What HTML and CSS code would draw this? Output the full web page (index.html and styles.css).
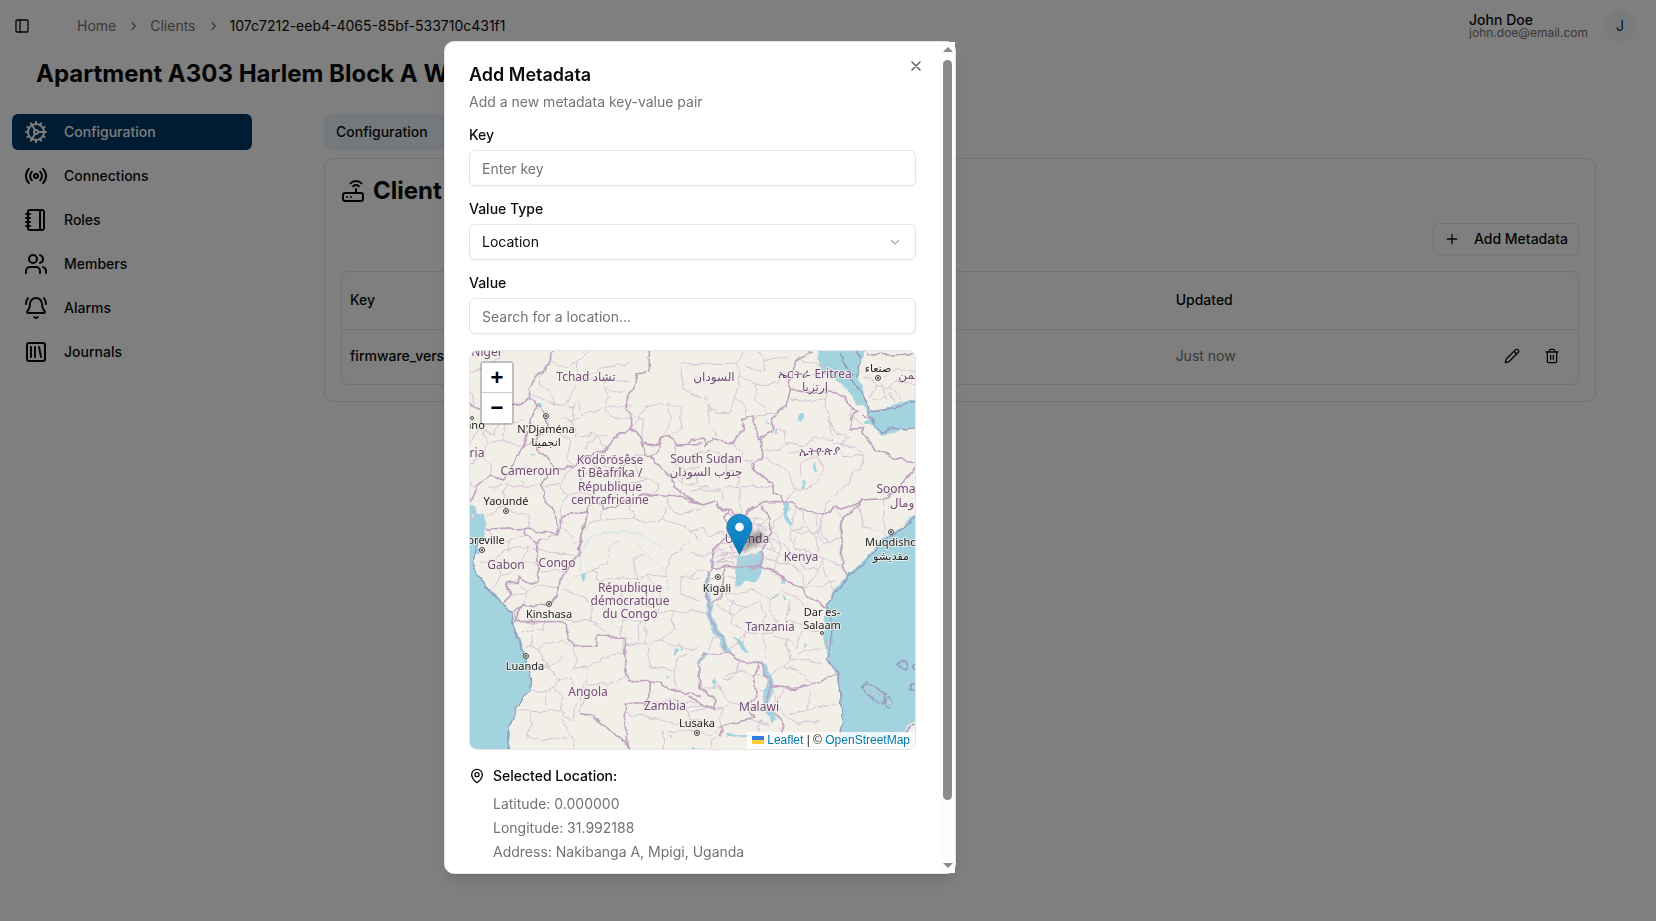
FILE: index.html
```html
<!DOCTYPE html>
<html lang="en">
<head>
<meta charset="utf-8">
<meta name="viewport" content="width=device-width, initial-scale=1">
<title>Client configuration</title>
<link rel="stylesheet" href="styles.css">
</head>
<body>
<div class="page">
  <header class="topbar">
    <button class="icon-btn" type="button" aria-label="Toggle sidebar"><svg class="icon sm" viewBox="0 0 24 24"><rect x="3" y="3" width="18" height="18" rx="2"/><path d="M9 3v18"/></svg></button>
    <nav class="crumbs" aria-label="Breadcrumb">
      <a href="#">Home</a>
      <svg class="crumb-sep" viewBox="0 0 15 15"><path d="M6 3.5l4 4-4 4"/></svg>
      <a href="#">Clients</a>
      <svg class="crumb-sep" viewBox="0 0 15 15"><path d="M6 3.5l4 4-4 4"/></svg>
      <span class="current">107c7212-eeb4-4065-85bf-533710c431f1</span>
    </nav>
    <div class="user">
      <div class="user-text"><span class="user-name">John Doe</span><span class="user-mail">john.doe@email.com</span></div>
      <span class="avatar">J</span>
    </div>
  </header>
  <h1 class="title">Apartment A303 Harlem Block A Wifi</h1>
  <div class="columns">
    <nav class="side" aria-label="Client sections">
      <a class="side-link active" href="#"><svg class="icon" viewBox="0 0 24 24"><circle cx="12" cy="12" r="8"/><circle cx="12" cy="12" r="2"/><path d="M12 2v2M12 22v-2M17 20.66l-1-1.73M11 10.27 7 3.34M20.66 17l-1.73-1M3.34 7l1.73 1M14 12h8M2 12h2M20.66 7l-1.73 1M3.34 17l1.73-1M17 3.34l-1 1.73M11 13.73l-4 6.93"/></svg>Configuration</a>
      <a class="side-link" href="#"><svg class="icon" viewBox="0 0 24 24"><path d="M4.9 19.1C1 15.2 1 8.8 4.9 4.9M7.8 16.2c-2.3-2.3-2.3-6.1 0-8.5M16.2 7.8c2.3 2.3 2.3 6.1 0 8.5M19.1 4.9C23 8.8 23 15.1 19.1 19"/><circle cx="12" cy="12" r="2"/></svg>Connections</a>
      <a class="side-link" href="#"><svg class="icon" viewBox="0 0 24 24"><path d="M2 6h4M2 10h4M2 14h4M2 18h4M16 2v20"/><rect x="4" y="2" width="16" height="20" rx="2"/></svg>Roles</a>
      <a class="side-link" href="#"><svg class="icon" viewBox="0 0 24 24"><path d="M16 21v-2a4 4 0 0 0-4-4H6a4 4 0 0 0-4 4v2"/><circle cx="9" cy="7" r="4"/><path d="M22 21v-2a4 4 0 0 0-3-3.87M16 3.13a4 4 0 0 1 0 7.75"/></svg>Members</a>
      <a class="side-link" href="#"><svg class="icon" viewBox="0 0 24 24"><path d="M10.268 21a2 2 0 0 0 3.464 0M22 8c0-2.3-.8-4.3-2-6M3.262 15.326A1 1 0 0 0 4 17h16a1 1 0 0 0 .74-1.673C19.41 13.956 18 12.499 18 8A6 6 0 0 0 6 8c0 4.499-1.411 5.956-2.738 7.326M4 2C2.8 3.7 2 5.7 2 8"/></svg>Alarms</a>
      <a class="side-link" href="#"><svg class="icon" viewBox="0 0 24 24"><rect x="3" y="3" width="18" height="18" rx="2"/><path d="M7 7v10M11 7v10M15 7l2 10"/></svg>Journals</a>
    </nav>
    <main class="main">
      <div class="tabs"><button class="tab" type="button">Configuration</button></div>
      <section class="card">
        <h2 class="card-title"><svg class="icon" viewBox="0 0 24 24"><rect x="2" y="14" width="20" height="8" rx="2"/><path d="M6.01 18H6M10.01 18H10M15 10v4M17.84 7.17a4 4 0 0 0-5.66 0M20.66 4.34a8 8 0 0 0-11.31 0"/></svg>Client Metadata</h2>
        <div class="card-actions"><button class="add-btn" type="button"><svg class="icon sm" viewBox="0 0 24 24"><path d="M5 12h14M12 5v14"/></svg>Add Metadata</button></div>
        <div class="table-wrap">
          <table class="table">
            <thead><tr><th class="col-key">Key</th><th class="col-value">Value</th><th>Updated</th><th aria-label="Actions"></th></tr></thead>
            <tbody><tr><td class="strong">firmware_version</td><td>1.0</td><td>Just now</td>
              <td><div class="row-actions">
                <button class="row-btn" type="button" aria-label="Edit"><svg class="icon sm" viewBox="0 0 24 24"><path d="M21.174 6.812a1 1 0 0 0-3.986-3.987L3.842 16.174a2 2 0 0 0-.5.83l-1.321 4.352a.5.5 0 0 0 .623.622l4.353-1.32a2 2 0 0 0 .83-.497zM15 5l4 4"/></svg></button>
                <button class="row-btn" type="button" aria-label="Delete"><svg class="icon sm" viewBox="0 0 24 24"><path d="M3 6h18M19 6v14a2 2 0 0 1-2 2H7a2 2 0 0 1-2-2V6M8 6V4a2 2 0 0 1 2-2h4a2 2 0 0 1 2 2v2M10 11v6M14 11v6"/></svg></button>
              </div></td></tr></tbody>
          </table>
        </div>
      </section>
    </main>
  </div>
</div>

<div class="overlay">
  <div class="dialog" role="dialog" aria-modal="true" aria-labelledby="dialog-title">
    <div class="dialog-body">
      <div class="dialog-head">
        <h2 class="dialog-title" id="dialog-title">Add Metadata</h2>
        <p class="dialog-desc">Add a new metadata key-value pair</p>
      </div>
      <div class="field"><label for="key">Key</label><input class="control" id="key" type="text" placeholder="Enter key"></div>
      <div class="field"><label for="type">Value Type</label>
        <div class="select-wrap"><select class="control" id="type"><option>Location</option></select><svg class="select-arrow" viewBox="0 0 24 24"><path d="M6 9l6 6 6-6"/></svg></div></div>
      <div class="field"><label for="value">Value</label><input class="control" id="value" type="text" placeholder="Search for a location..."></div>
      <div class="map">
        <svg class="map-canvas" viewBox="470 351 445 398" preserveAspectRatio="xMidYMid slice" role="img" aria-label="Map of central Africa">
          <defs>
            <filter id="rough" x="0" y="0" width="1" height="1" filterUnits="objectBoundingBox" color-interpolation-filters="sRGB"><feTurbulence type="fractalNoise" baseFrequency="0.09" numOctaves="2" seed="4"/><feDisplacementMap in="SourceGraphic" scale="7" xChannelSelector="R" yChannelSelector="G"/></filter>
            <linearGradient id="pin" x1="0" y1="0" x2="0" y2="1"><stop offset="0" stop-color="#1e93cf"/><stop offset="1" stop-color="#0076b8"/></linearGradient>
            <filter id="soft" x="-50%" y="-50%" width="200%" height="200%"><feGaussianBlur stdDeviation="2"/></filter>
          </defs>
          <rect x="460" y="340" width="470" height="420" fill="#f2efe9"/>
          <g filter="url(#rough)">
            <rect x="460" y="340" width="470" height="420" fill="none"/>
            <!-- north-west -->
            <g transform="translate(460 340) scale(.3333)">
              <path class="sea" d="M0 478L45 500 50 515 75 518 80 565 70 600 55 610 60 640 0 640z"/>
              <path class="isle" d="M36 515l12 8-6 12-10-3z"/>
              <path class="water" d="M225 190l20-2 6 10-14 8zM320 198l20 2 5 8-12-2zM210 335l12 6 6 8-12-2zM178 425l12 2-4 4zM104 440l5 8-4 0zM130 430l5 5"/>
              <path class="river" d="M370 630C380 590 420 575 500 575 560 580 590 610 600 630"/>
              <path class="adm" d="M275 65L320 85 350 65 388 30M255 75L240 130 275 160 285 195 215 160M350 65L348 130 380 110 420 85 490 75 510 60M285 195L330 180 348 130M370 115L430 120 510 125M430 120L440 170 435 200 515 195M440 150L495 155M340 240L370 220 430 205 450 230 515 240M345 185L340 240 350 290 400 280 440 325M300 235L340 240M290 265L330 300 320 350 345 375M380 330L385 300 440 280M360 215L355 180M28 100L120 50 125 30M28 150L40 190M120 250L100 290 60 260 28 320M60 260L80 310 70 350 28 370M80 310L125 300 190 320M70 350L95 380 90 405M150 395L200 380 245 410M125 300L140 250 190 240M228 300L190 320M85 440L135 435 180 440 245 435M135 435L125 500 80 530M125 500L170 520 210 530 212 565M28 430L50 440M245 440L300 430 320 470 360 450 400 470 385 495M300 430L320 400 345 375M320 470L300 500 310 530M400 340L410 380 470 390 520 350 555 345M470 390L480 440 510 475M360 450L365 410 410 380M480 440L560 420 600 440 575 470M520 350L540 400 560 420M520 260L560 200 620 190 640 240 605 290M545 295L550 240 520 220M620 190L665 200 660 270 630 290M664 72L720 70M664 72L670 150 700 165 720 160M645 315L640 370 680 390 720 380M680 390L670 440M605 385L680 440 720 430M620 500L610 540 560 550 520 530 430 540 425 505M610 540L680 560 720 600M520 530L510 475M370 560L420 540M620 470L640 520 720 510M90 570L95 610 140 600 150 630M140 600L195 590M235 600L300 585M310 560L350 610"/>
              <path class="nat" d="M275 20L275 65 230 112 205 150 213 172 190 185 150 197M0 180L60 205M213 172L228 200 213 245 190 320 165 350 150 395 130 420 90 405 50 440 30 485M228 195L250 215 262 260 232 300 240 335 265 355 285 390 245 430 250 470 290 525 295 585M285 390L345 375 400 340 440 325 480 280 515 268 545 295 555 345M565 20L565 100 530 105 520 150 500 170 495 205 515 225 515 268M555 345L575 347 600 385 635 410 640 440 685 470 725 495M552 310L590 315 605 290 630 290 650 315 700 312 725 310M605 290L590 335 575 347M295 585L310 530 380 515 385 495 420 490 430 505 470 495 510 475 560 460 620 470 660 465 725 495M380 515L360 600 358 640M80 570L200 565 240 575 295 585M200 565L195 590 235 610 235 640"/>
            </g>
            <!-- north-east -->
            <g transform="translate(690 340) scale(.3333)">
              <path class="sea" d="M383 20L395 100 440 120 470 150 500 190 535 215 545 235 515 248 540 255 575 285 620 275 690 252 690 176 620 190 570 212 540 212 525 170 515 130 505 95 515 60 530 20z"/>
              <path class="water" d="M318 225l20-3 2 15-8 8-12-5zM226 240l8 4 6 12-8-2zM250 265l8-6 4 22-6 4zM374 370l6 0-2 20-8 0zM345 420l8 4-10 24-6 0zM282 488l12 4-2 38 14 32-20-16z"/>
              <path class="coast" d="M450 30L460 70 485 100 480 120 515 150 535 205 548 250 575 278 610 265 650 270 690 250M545 216L600 205 690 180M500 30L515 60 500 110"/>
              <path class="adm" d="M0 70L140 70 165 30M140 70L150 110 135 170 160 200 175 225M0 160L50 175 60 210 120 220 135 170M60 210L55 260 90 290M150 110L200 130 260 130 280 100 300 130M165 75L220 100 225 60 290 50M190 230L240 220 262 215M200 130L195 180 230 215M225 60L200 30M0 345L60 330 100 350 185 360M20 400L30 450 90 450 100 480M100 440L215 440 250 445M150 445L150 500M100 350L115 390 150 400 140 440M185 372L150 340 130 310M300 180L360 185 410 175 415 240 430 300 380 290 340 320 290 310 285 270 262 260M415 240L440 280 480 290M225 330L270 330 290 310M225 350L250 370 285 385 300 400 310 450 290 485M300 340L335 340M330 370L380 350 400 380 380 430 350 450 310 450M440 330L460 350 520 345 510 390 480 395 480 430 450 450 410 490 400 525M430 310L500 320 520 345M330 370L335 420M455 170L490 200 480 240M520 260L500 240 483 240M415 150L410 175M470 290L455 320M540 170L560 140 600 145 620 120 677 130M540 170L570 180 600 160 610 190M560 140L550 120 520 110M570 130L590 180M600 145L640 190M580 110L620 85 677 95M505 500L520 560 580 570 590 590M580 480L585 570M330 510L350 560 385 600 380 630M350 560L300 580 310 630M400 525L385 570 420 610M440 510L455 540M300 510L255 540 240 590 250 630M340 60L400 80M320 100L385 110M0 450L60 440"/>
              <path class="nat" d="M365 35L320 60 300 130 300 160 285 200 262 215 245 250 245 275 218 290 218 350M-5 310L5 295 45 295 45 320 70 295 130 310 160 270 155 235 170 235 175 225 190 225 190 255 215 300M218 350L185 372 215 405 250 435 250 460 280 465 280 485M-5 485L40 495 70 485 100 515 125 513 160 525 190 505 230 485 280 485M280 485L310 492 350 515 400 525 440 500 455 508 520 480 590 475 690 375M690 374L640 360 560 330 515 282 520 265 483 267M300 150L340 155 420 150 465 170 500 215 483 240 483 267M520 225L545 235M520 480L455 540 455 640M530 40L600 45 690 40"/>
            </g>
            <!-- south-west -->
            <g transform="translate(460 540) scale(.3333)">
              <path class="sea" d="M0 -10L58 -10 40 65 60 110 90 150 130 185 155 215 160 250 180 290 195 340 212 400 210 450 170 500 155 550 143 640 0 640z"/>
              <path class="coast" d="M55 0L36 65 56 110 86 152 126 188 152 218 157 250 177 292 190 340 212 400 210 455 168 500 150 560 138 640"/>
              <path class="water" d="M362 100l14-4 0 18-6 20-4-18zM645 322l10 2-8 22-6 0zM715 350l10 0 0 25-8-8zM660 320l6 0-4 14zM618 405l10 8-6 4zM625 580l8 6-4 12z"/>
              <path class="river" d="M388 0C365 25 350 50 365 90M520 0C560 50 640 80 620 150M420 160C440 220 460 260 520 300"/>
              <path class="adm" d="M60 70L110 60 130 30 200 20 232 30M110 60L120 110 90 150M120 110L160 90 190 60 238 75M190 60L200 20M150 165L200 160 235 130M175 130L200 160 195 195M240 100L290 90 320 90M235 130L300 145M240 30L300 40 355 50M345 110L400 85 440 70 450 20 470 0M400 85L420 130 470 110 530 120 560 105 620 110 625 60 690 0M530 120L520 60 555 40M310 150L370 165 400 200 480 180 490 130M400 200L390 240 340 245 310 235M390 240L440 270M480 180L540 190 600 215 720 215M560 105L600 150 600 215M665 110L720 115M665 110L662 160 720 185M480 290L490 240 540 240 535 315 490 310M540 240L560 215M560 240L555 310M535 315L600 300 640 270 640 215M600 300L700 330 720 320M565 320L570 380 640 390 660 350 700 330M640 390L645 440M185 275L250 270 255 245M200 325L215 320 220 285M215 320L240 330 250 310 305 305 345 320M240 330L260 380 300 420 340 415 345 440M345 320L345 385 385 380 430 350 490 340M385 380L380 420 360 480 345 500 330 535 310 530 305 470 280 440 250 455 215 450M380 435L440 435 503 410M265 380L310 350M215 380L265 378M170 505L210 515 305 512M215 520L210 560 195 600M305 540L335 590 340 628M200 585L250 600 320 590M280 440L300 420M255 460L265 500M496 520L560 530 640 550 720 555M610 575L720 570M610 575L610 628M640 500L720 500M680 500L690 540 720 540M565 492L620 480 720 490M360 518L380 440"/>
              <path class="nat" d="M240 -5L232 30 238 75 230 120 205 130 175 110 175 130 140 130 150 165 130 185M358 -5L355 50 320 90 300 120 295 165 270 190 225 200 190 195 160 215 165 240 185 200M160 245L310 245 320 275 345 320 408 318 412 285 445 283 450 293 490 295 492 360 503 425 560 425 580 430 605 430 615 440 665 455 700 460 725 470M568 425L565 492 496 492 496 600 515 635M360 518L400 535 440 560 480 590 510 630"/>
            </g>
            <!-- south-east -->
            <g transform="translate(690 490) scale(.3333)">
              <path class="sea" d="M690 50L640 110 570 150 520 215 475 255 435 290 410 345 400 400 400 450 415 500 415 520 440 555 448 610 455 690 450 740 620 740 690 680z"/>
              <path class="coast" d="M690 65L645 112 575 155 525 220 475 262 430 310 410 350 425 400 425 460 412 510 440 545 448 600 458 690 452 740M640 728L690 690"/>
              <path class="isle" d="M530 585l6 0 2 22-6-4zM542 618l8 0 0 6-6 0zM568 610l8 4-4 4zM590 628l8 4 0 8-6 2zM408 456l8 6-6 8z"/>
              <path class="coast" d="M533 577L588 612 572 642 527 620 517 595zM585 625l14-6 9 16-8 17-14-4-5-12zM628 512l14-4 9 14-6 14-14-2-6-12zM677 585l-14 0-2 14 16 2M677 518l-8 10 8 12"/>
              <path class="water lake" d="M143 195L165 200 215 187 217 235 205 262 190 278 165 268 150 288 138 290 142 235zM48 250l8 2 2 60 8 50 8 40 30 50 18 34-16-6-35-55-15-35-6-60zM216 520l12 6 10 18 4 40 4 20-14 32 10 30 12 20-6 8-18-30-10-40 12-50-4-30zM135 448l20 14 22 24-10-2-28-20zM25 510l20-22 4 6-20 24z"/>
              <path class="water" d="M70 195l-12 15 2 10 10-10zM90 155l14-28 6-2-4 22zM62 580l14-14 2 14-10 10zM240 320l20-8 0 6-14 6zM280 260l6 4-2 18-4 0zM275 318l10 2-2 8-8-2zM282 40l10 0 2 36 14 30-22-20zM340 462l8 4-8 10zM268 710l8 6-2 8zM105 732l50 4 55-4-30 8-70 4zM0 770l40 4 0 10-40 0z"/>
              <path class="adm" d="M0 125L40 115 60 140 100 125M0 190L40 200 70 185M0 260L30 240 50 250M0 365L60 365M110 75L150 70 150 50M160 75L210 90M125 90L235 110M120 110L110 140 150 150 120 170 160 180 110 190 90 215 130 220 100 180 75 190 90 160 120 160 140 200 70 215 110 215M235 85L200 110 215 140 190 150 230 165 195 175 215 130 240 140M170 80L190 110 180 140 210 160M150 150L175 160 160 190M80 200L120 190 150 215 140 230M190 185L190 230M165 200L165 230M180 190L215 200M130 70L140 100 120 120M150 90L160 130 140 140M200 80L190 100 230 120M175 65L170 90M85 170L100 200 80 225M100 140L130 135M210 170L225 150 245 160M240 150L280 160 300 190 290 220 330 240 345 290M220 175L270 190 260 215 290 220M245 120L270 150 270 190M225 200L260 215 250 240M320 60L300 110 320 130 380 125 400 160 450 150M380 125L385 75M320 130L310 180 345 175 400 210 455 225M400 210L380 250 345 290M400 210L410 270 430 300M345 290L400 285 435 270M300 190L340 230 385 240M110 260L140 265M75 280L95 290 70 300 90 320 65 330M95 270L80 250 60 270M105 310L150 310 200 300 240 325 270 315M80 350L130 370 120 400 165 425M130 330L120 370M130 370L160 350 210 340 225 380 215 400M105 310L130 340 170 350M240 330L250 390 270 400M270 300L330 330 345 350M300 330L290 390 320 400 345 415M120 480L165 430 240 430 270 400M165 430L160 460M220 430L225 510M245 440L290 450 300 510 280 530 240 555M290 450L320 470 340 415 395 430M300 510L400 520M320 490L390 470M280 530L330 540 370 580M35 600L80 590 100 600 120 640 90 670 90 710M100 560L150 540 190 560M60 480L65 440 90 450M150 510L130 560 100 570M170 650L120 640M72 655L100 660M190 590L220 600M200 550L220 560M175 690L240 700M250 600L255 640 290 680 330 700 390 690M360 600L355 660 440 640M355 660L300 670M290 590L255 640M0 670L40 655M0 700L60 740 90 710M90 730L60 770M210 690L200 770"/>
              <path class="nat" d="M105 230L215 230 340 295 345 315 410 355M125 63L105 80 110 130 70 185 65 235 105 230M65 235L50 260M215 50L240 85 245 130 215 180 215 230M105 230L100 270 95 320 65 345M50 260L52 330 65 395 110 478M118 487L40 492 25 515 30 600 70 620 72 655 40 650 -5 615M118 487L150 510 210 520 190 560 200 620 170 650 190 685 90 710 95 740M215 520L240 590 320 595 370 580 440 550M240 590L230 640 260 680 280 700 270 735M455 90L455 225 475 255"/>
            </g>
          </g>
          <g class="town">
            <circle cx="546" cy="416" r="2.5"/><circle cx="506" cy="511" r="2.5"/><circle cx="482" cy="550" r="2.5"/><circle cx="549" cy="604" r="2.5"/><circle cx="526" cy="656" r="2.5"/><circle cx="718" cy="577" r="2.5"/><circle cx="697" cy="733" r="2.5"/><circle cx="891" cy="532" r="2.5"/><circle cx="878" cy="378" r="2.5"/><circle cx="822" cy="633" r="1.5"/><circle cx="472" cy="418" r="1.5"/>
          </g>
          <g class="town-dot"><circle cx="546" cy="416" r="1"/><circle cx="506" cy="511" r="1"/><circle cx="482" cy="550" r="1"/><circle cx="549" cy="604" r="1"/><circle cx="526" cy="656" r="1"/><circle cx="718" cy="577" r="1"/><circle cx="697" cy="733" r="1"/><circle cx="891" cy="532" r="1"/><circle cx="878" cy="378" r="1"/></g>
          <g class="country">
            <text x="487" y="356">Niger</text><text x="586" y="381">Tchad تشاد</text><text x="714" y="381">السودان</text><text x="815" y="378">ኤርትራ Eritrea</text><text x="815" y="391">إرتريا</text><text x="908" y="379">يمن</text>
            <text x="477" y="457">ria</text><text x="530" y="475">Cameroun</text>
            <text x="610" y="464">Ködörösêse</text><text x="610" y="477">tî Bêafrîka /</text><text x="610" y="491">République</text><text x="610" y="504">centrafricaine</text>
            <text x="706" y="463">South Sudan</text><text x="706" y="476">جنوب السودان</text><text x="819" y="455">ኢትዮጵያ</text>
            <text x="896" y="493">Sooma</text><text x="902" y="507">ومال</text>
            <text x="506" y="569">Gabon</text><text x="557" y="567">Congo</text><text x="747" y="543">Uganda</text><text x="801" y="561">Kenya</text>
            <text x="630" y="592">République</text><text x="630" y="605">démocratique</text><text x="630" y="618">du Congo</text>
            <text x="770" y="631">Tanzania</text><text x="588" y="696">Angola</text><text x="665" y="710">Zambia</text><text x="759" y="711">Malawi</text>
          </g>
          <g class="city">
            <text x="546" y="433">N'Djaména</text><text x="546" y="446">انجمينا</text><text x="475" y="429">ano</text><text x="506" y="505">Yaoundé</text><text x="486" y="544">breville</text><text x="549" y="618">Kinshasa</text><text x="525" y="670">Luanda</text><text x="717" y="592">Kigali</text><text x="697" y="727">Lusaka</text><text x="822" y="616">Dar es-</text><text x="822" y="629">Salaam</text><text x="891" y="546">Muqdisho</text><text x="891" y="560">مقديشو</text><text x="878" y="372">صنعاء</text>
          </g>
          <path d="M740 553L748 537 758 530 764 534 760 543z" fill="#000" opacity=".35" filter="url(#soft)"/>
          <path d="M739.500 554.500L729.500 535C727.500 531 727 529 727 526.500A12.500 12 0 0 1 752 526.500C752 529 751.500 531 749.500 535z" fill="url(#pin)" stroke="#1372a8" stroke-width=".8"/>
          <circle cx="739.500" cy="527" r="4.300" fill="#fff"/>
        </svg>
        <div class="zoom"><button type="button" aria-label="Zoom in">+</button><button type="button" aria-label="Zoom out">−</button></div>
        <div class="credit"><a href="#"><svg class="flag" viewBox="0 0 12 8"><path fill="#2f7de1" d="M0 0h12v4H0z"/><path fill="#ffd035" d="M0 4h12v4H0z"/></svg> Leaflet</a> | © <a href="#">OpenStreetMap</a></div>
      </div>
      <div class="picked">
        <svg class="icon sm picked-icon" viewBox="0 0 24 24"><path d="M20 10c0 4.993-5.539 10.193-7.399 11.799a1 1 0 0 1-1.202 0C9.539 20.193 4 14.993 4 10a8 8 0 0 1 16 0"/><circle cx="12" cy="10" r="3"/></svg>
        <div class="picked-text">
          <p class="picked-title">Selected Location:</p>
          <p>Latitude: 0.000000</p><p>Longitude: 31.992188</p><p>Address: Nakibanga A, Mpigi, Uganda</p>
        </div>
      </div>
    </div>
    <div class="scrollbar" aria-hidden="true"><span class="arrow up"></span><span class="thumb"></span><span class="arrow down"></span></div>
    <button class="close" type="button" aria-label="Close"><svg class="icon sm" viewBox="0 0 24 24"><path d="M18 6 6 18M6 6l12 12"/></svg></button>
  </div>
</div>
</body>
</html>
```
FILE: styles.css
```css
* { box-sizing: border-box; }
body { margin: 0; background: #fff; color: #0a0a0a; font: 14px/20px Inter, "Liberation Sans", sans-serif; }
h1, h2, p { margin: 0; }
a { color: inherit; text-decoration: none; }
button { font: inherit; color: inherit; background: none; border: 0; padding: 0; cursor: pointer; }
.icon { width: 24px; height: 24px; flex: none; fill: none; stroke: currentColor; stroke-width: 2; stroke-linecap: round; stroke-linejoin: round; }
.icon.sm { width: 16px; height: 16px; }

.page { min-height: 100vh; }
.topbar { display: flex; align-items: center; height: 52px; padding: 0 20px 0 14px; }
.icon-btn, .row-btn { display: grid; place-items: center; }
.crumbs { display: flex; align-items: center; gap: 10px; margin-left: 47px; color: #737373; }
.crumb-sep { width: 14px; height: 14px; fill: none; stroke: currentColor; stroke-width: 1.2; }
.current { color: #0a0a0a; }
.user { display: flex; align-items: center; gap: 16px; margin-left: auto; }
.user-text { display: flex; flex-direction: column; }
.user-name { font-weight: 500; line-height: 14px; }
.user-mail { font-size: 12px; line-height: 12px; color: #737373; }
.avatar { display: grid; place-items: center; width: 32px; height: 32px; border-radius: 50%; background: #f5f5f5; color: #003866; }
.title { padding: 6px 36px 0; font-size: 24px; line-height: 32px; font-weight: 700; }

.columns { display: flex; gap: 72px; padding: 24px 60px 0 12px; }
.side { display: flex; flex-direction: column; gap: 8px; width: 240px; flex: none; }
.side-link { display: flex; align-items: center; gap: 16px; height: 36px; padding: 0 12px; border-radius: 6px; font-weight: 500; }
.side-link.active { background: #003866; color: #fafafa; }
.main { flex: 1; min-width: 0; }
.tabs { display: flex; width: 40%; height: 36px; margin-bottom: 8px; border-radius: 8px; background: #ebf3fa; }
.tab { padding: 0 12px; font-weight: 500; }
.card { padding: 16px; border: 1px solid #e5e5e5; border-radius: 8px; }
.card-title { display: flex; align-items: center; gap: 8px; font-size: 24px; line-height: 32px; font-weight: 700; }
.card-actions { display: flex; justify-content: flex-end; margin: 16px 0; }
.add-btn { display: flex; align-items: center; gap: 14px; height: 32px; padding: 0 10px; border: 1px solid #e5e5e5; border-radius: 6px; font-weight: 500; box-shadow: 0 1px 2px rgba(0, 0, 0, .05); }
.table-wrap { border: 1px solid #e5e5e5; border-radius: 8px; }
.table { width: 100%; border-collapse: collapse; table-layout: fixed; text-align: left; }
.table th { height: 57px; padding: 0 8px; font-weight: 500; border-bottom: 1px solid #e5e5e5; }
.table td { height: 55px; padding: 0 10px 2px 8px; color: #737373; }
.table td.strong { color: #0a0a0a; font-weight: 500; }
.col-key, .col-value { width: 33.4%; }
.row-actions { display: flex; justify-content: flex-end; gap: 8px; color: #0a0a0a; }
.row-btn { width: 32px; height: 32px; }

.overlay { position: fixed; inset: 0; display: flex; align-items: center; justify-content: center; padding: 0 256px 6px 0; background: rgba(0, 0, 0, .5); }
.dialog { position: relative; display: flex; width: 512px; height: calc(100vh - 88px); border: 1px solid #e5e5e5; border-radius: 10px; background: #fff; box-shadow: 0 10px 15px -3px rgba(0, 0, 0, .1), 0 4px 6px -4px rgba(0, 0, 0, .1); }
.dialog-body { display: flex; flex-direction: column; gap: 16px; flex: 1; min-width: 0; padding: 24px 24px 0; overflow: hidden; }
.dialog-head { display: flex; flex-direction: column; gap: 8px; }
.dialog-title { font-size: 18px; line-height: 18px; font-weight: 600; }
.dialog-desc { color: #737373; }
.field { display: flex; flex-direction: column; gap: 8px; }
.field label { line-height: 14px; font-weight: 500; }
.control { appearance: none; width: 100%; height: 36px; padding: 0 12px; border: 1px solid #e5e5e5; border-radius: 6px; background: #fff; color: #0a0a0a; font: inherit; box-shadow: 0 1px 2px rgba(0, 0, 0, .05); }
.control::placeholder { color: #737373; opacity: 1; }
.select-wrap { position: relative; }
.select-arrow { position: absolute; right: 13px; top: 10px; width: 16px; height: 16px; fill: none; stroke: #b0b0b0; stroke-width: 2; pointer-events: none; }
.close { position: absolute; right: 31px; top: 16px; width: 16px; height: 16px; color: #555; }
.close .icon { display: block; }

.map { position: relative; flex: none; height: 400px; border: 1px solid #e5e5e5; border-radius: 8px; overflow: hidden; }
.map-canvas { display: block; width: 100%; height: 100%; }
.sea { fill: #a3d3df; }
.water { fill: #a3d3df; }
.lake { stroke: #a3d3df; stroke-width: 5; }
.isle { fill: #e4dbe4; stroke: #b3a0bd; stroke-width: 2; }
.river { fill: none; stroke: #cfe3e6; stroke-width: 3; }
.coast { fill: none; stroke: #9299b8; stroke-width: 4; }
.adm { fill: none; stroke: #d6c3d6; stroke-width: 3; }
.nat { fill: none; stroke: #bfa3bf; stroke-width: 5; }
.town circle { fill: #f2efe9; stroke: #444; }
.town-dot circle { fill: #333; }
.country text, .city text { font-family: "Noto Sans", "DejaVu Sans", sans-serif; font-size: 11px; text-anchor: middle; paint-order: stroke; stroke: #f5f2ee; stroke-opacity: .8; stroke-width: 2px; }
.country text { fill: #734b78; font-size: 12px; }
.city text { fill: #222; }
.zoom { position: absolute; left: 10px; top: 10px; border: 2px solid rgba(0, 0, 0, .2); border-radius: 4px; background-clip: padding-box; }
.zoom button { display: block; width: 30px; height: 30px; background: #fff; color: #000; font: 700 22px/30px "Liberation Sans", sans-serif; }
.zoom button:first-child { border-bottom: 1px solid #ccc; }
.credit { position: absolute; right: 0; bottom: 0; padding: 0 5px; background: rgba(255, 255, 255, .8); color: #333; font: 12px/17px "Liberation Sans", Arial, sans-serif; }
.credit a { color: #0078a8; }
.flag { width: 12px; height: 8px; }

.picked { display: flex; gap: 8px; }
.picked-icon { margin-top: 2px; }
.picked-text { display: flex; flex-direction: column; gap: 4px; color: #737373; }
.picked-title { margin-bottom: 4px; color: #0a0a0a; font-weight: 500; }

.scrollbar { display: flex; flex-direction: column; align-items: center; width: 15px; padding: 5px 0; background: #fcfcfc; }
.thumb { width: 9px; height: 740px; margin: 8px 0 auto; border-radius: 5px; background: #8b8b8b; }
.arrow { border: 5px solid transparent; border-top-width: 0; border-bottom: 5px solid #8b8b8b; }
.arrow.down { border-width: 5px 5px 0; border-color: #8b8b8b transparent transparent; }
```
